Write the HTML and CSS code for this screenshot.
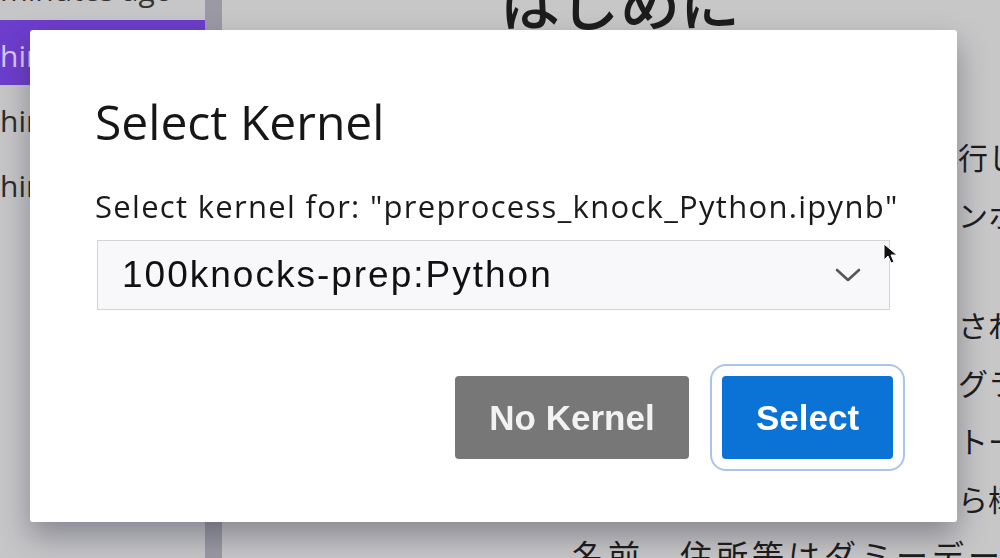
FILE: index.html
```html
<!DOCTYPE html>
<html>
<head>
  <title>Select Kernel</title>
  <link rel="stylesheet" href="styles.css">
</head>
<body>
<div class="app">
  <aside class="sidebar">
    <div class="file-meta">minutes ago</div>
    <div class="file-row active">hin</div>
    <div class="file-row">hin</div>
    <div class="file-row">hin</div>
  </aside>
  <div class="scrollbar"></div>
  <main class="doc">
    <h1 class="doc-title">はじめに</h1>
    <p class="doc-line">行しています</p>
    <p class="doc-line">ンホ</p>
    <p class="doc-line gap">されます</p>
    <p class="doc-line">グラム</p>
    <p class="doc-line">トール</p>
    <p class="doc-line">ら構成</p>
    <p class="doc-line lead">名前、住所等はダミーデータ</p>
  </main>
</div>

<!-- modal dialog on top of the dimmed workspace -->
<div class="backdrop">
  <div class="dialog">
    <h2 class="dialog-title">Select Kernel</h2>
    <label class="dialog-label">Select kernel for: "preprocess_knock_Python.ipynb"</label>
    <div class="kernel-select">
      <span class="kernel-name">100knocks-prep:Python</span>
      <svg class="chevron" width="26" height="16" viewBox="0 0 26 16">
        <path d="M2 3 L13 13 L24 3" fill="none" stroke="#555" stroke-width="2.6" stroke-linecap="round" stroke-linejoin="round"/>
      </svg>
    </div>
    <div class="dialog-footer">
      <button class="btn btn-secondary">No Kernel</button>
      <button class="btn btn-primary">Select</button>
    </div>
  </div>
</div>

<svg class="cursor" width="16" height="22" viewBox="0 0 16 22">
  <path d="M1 1 L1 17 L5 13 L8 20 L11 19 L8 12 L14 12 Z" fill="#111" stroke="#fff" stroke-width="1"/>
</svg>
</body>
</html>
```

FILE: styles.css
```css
body {
  margin: 0;
  width: 1000px;
  height: 558px;
  overflow: hidden;
  font-family: "Open Sans", "Noto Sans", sans-serif;
  background-color: #c7c7c8;
}

.app {
  display: flex;
  height: 558px;
}

.sidebar {
  width: 205px;
  background-color: #c6c6c8;
  color: #2a2a2a;
  font-size: 30px;
  overflow: hidden;
  white-space: nowrap;
}

.file-meta {
  height: 20px;
  line-height: 20px;
  margin-top: -20px;
  padding-bottom: 20px;
  color: #333;
  font-size: 30px;
}

.file-row {
  height: 65px;
  line-height: 72px;
  color: #2b2b2b;
}

.file-row.active {
  background-color: #6d3dcc;
  color: #d9c9f7;
}

.scrollbar {
  width: 17px;
  background-color: #9b99a4;
}

.doc {
  flex: 1;
  overflow: hidden;
  white-space: nowrap;
  color: #1c1c1c;
  font-family: "Noto Sans CJK JP", sans-serif;
}

.doc-title {
  margin: -30px 0 0 278px;
  font-size: 60px;
  line-height: 60px;
  font-weight: 500;
}

.doc-line {
  margin: 0 0 0 736px;
  font-size: 30px;
  line-height: 58px;
}

.doc-title + .doc-line {
  margin-top: 97px;
}

.doc-line.gap {
  margin-top: 52px;
}

.doc-line.lead {
  margin-top: -2px;
  margin-left: 350px;
  font-size: 32px;
  letter-spacing: 4px;
}

.backdrop {
  position: fixed;
  top: 0;
  left: 0;
  right: 0;
  bottom: 0;
}

.dialog {
  position: absolute;
  left: 30px;
  top: 30px;
  width: 927px;
  height: 492px;
  box-sizing: border-box;
  padding: 61px 64px 63px 65px;
  display: flex;
  flex-direction: column;
  background-color: #fff;
  border-radius: 3px;
  box-shadow: 0 14px 30px rgba(40, 40, 60, 0.4);
}

.dialog-title {
  margin: 0;
  font-size: 48px;
  line-height: 62px;
  font-weight: 400;
  color: #161616;
}

.dialog-label {
  margin-top: 33px;
  font-size: 31px;
  line-height: 40px;
  letter-spacing: 1.3px;
  color: #1a1a1a;
  white-space: nowrap;
}

.kernel-select {
  margin-top: 14px;
  margin-left: 2px;
  width: 793px;
  height: 70px;
  box-sizing: border-box;
  display: flex;
  align-items: center;
  justify-content: space-between;
  padding: 0 28px 0 24px;
  background-color: #f8f8fa;
  border: 1px solid #d4d4d6;
}

.kernel-name {
  font-family: "Liberation Sans", Arial, sans-serif;
  font-size: 37px;
  letter-spacing: 2px;
  color: #111;
}

.dialog-footer {
  margin-top: auto;
  display: flex;
  justify-content: flex-end;
  gap: 33px;
}

.btn {
  height: 83px;
  border: none;
  border-radius: 4px;
  color: #fff;
  font-family: "Liberation Sans", Arial, sans-serif;
  font-size: 35px;
  font-weight: bold;
  cursor: pointer;
}

.btn-secondary {
  width: 234px;
  background-color: #777777;
  color: #f2f2f2;
}

.btn-primary {
  width: 171px;
  background-color: #0b73d6;
  outline: 2px solid #a9c6ea;
  outline-offset: 10px;
}

.cursor {
  position: fixed;
  left: 883px;
  top: 243px;
}
```
